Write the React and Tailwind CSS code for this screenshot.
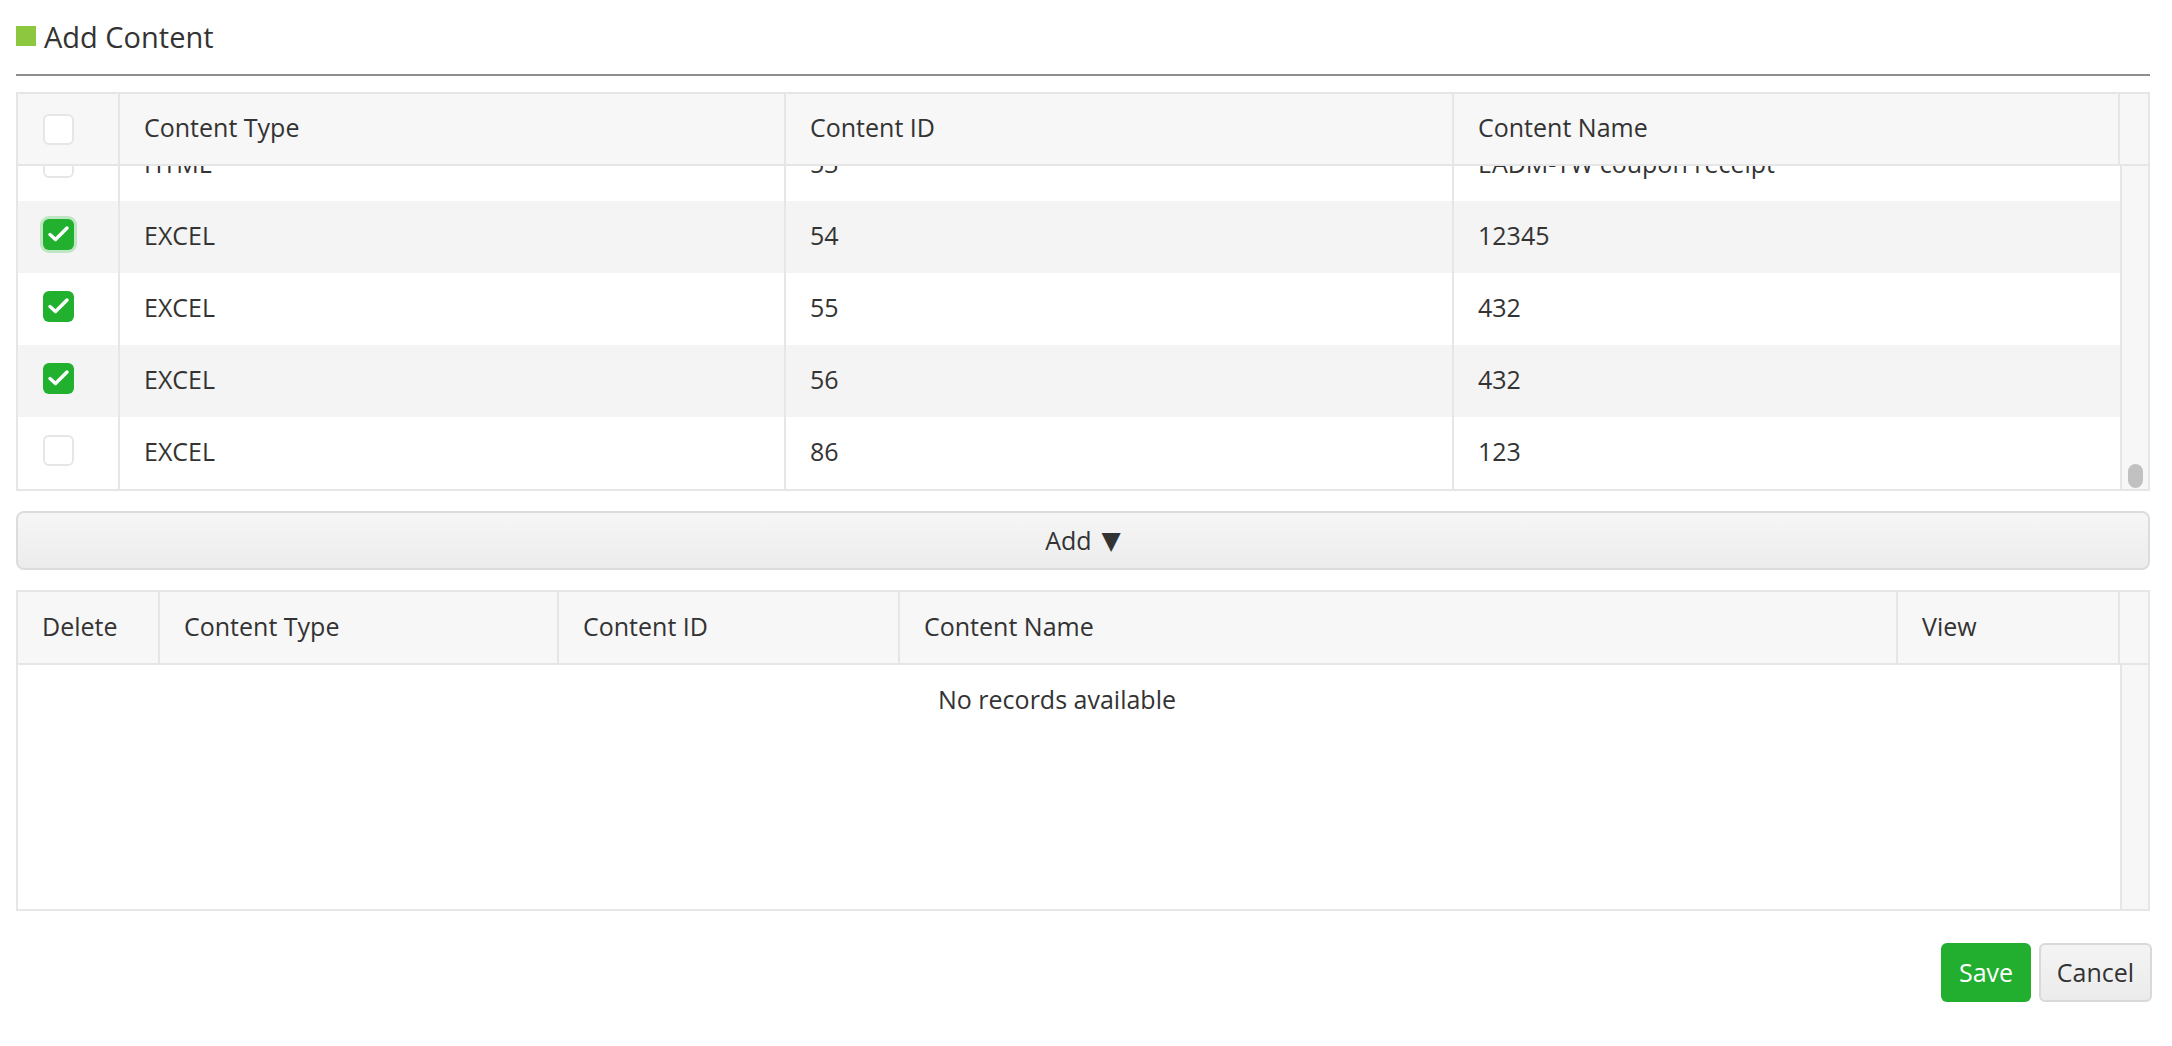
import React, { useRef, useLayoutEffect } from 'react';

// rows of the source grid (the first ones are scrolled out of view)
const sourceRows = [
  { type: 'HTML', id: 51, name: 'EADM-TW coupon issue', checked: false },
  { type: 'HTML', id: 52, name: 'EADM-TW coupon notice', checked: false },
  { type: 'HTML', id: 53, name: 'EADM-TW coupon receipt', checked: false },
  { type: 'EXCEL', id: 54, name: '12345', checked: true, focus: true },
  { type: 'EXCEL', id: 55, name: '432', checked: true },
  { type: 'EXCEL', id: 56, name: '432', checked: true },
  { type: 'EXCEL', id: 86, name: '123', checked: false },
];

const CheckBox = ({ checked, focus }) =>
  checked ? (
    <span
      className={`block h-[31px] w-[31px] rounded-[6px] bg-[#22b02f] ${focus ? 'ring-[3px] ring-[#bfe6c2]' : ''}`}
    >
      <svg viewBox="0 0 31 31" width="31" height="31" fill="none" stroke="white" strokeWidth="3.4" strokeLinecap="round" strokeLinejoin="round">
        <polyline points="7 15.5 12.5 20.5 24 9" />
      </svg>
    </span>
  ) : (
    <span className="block h-[31px] w-[31px] rounded-[6px] border-2 border-[#e6e6e6] bg-white" />
  );

export default function App() {
  const bodyRef = useRef(null);

  useLayoutEffect(() => {
    // la grilla arranca desplazada hasta el final
    if (bodyRef.current) bodyRef.current.scrollTop = 181;
  }, []);

  return (
    <div className="min-h-screen bg-white pl-4 pr-[22px] font-['Open_Sans',sans-serif] text-[#333]">
      {/* Title */}
      <div className="flex h-[76px] items-center gap-[8px] border-b-2 border-[#8f8f8f] pb-[2px]">
        <span className="h-[20px] w-[20px] bg-[#8dc63f]" />
        <h2 className="text-[29px] leading-none">Add Content</h2>
      </div>

      {/* Source grid */}
      <div className="mt-4 border-2 border-[#e6e6e6] text-[25px]">
        <div className="grid h-[72px] grid-cols-[102px_666px_668px_666px_1fr] border-b-2 border-[#e6e6e6] bg-[#f7f7f7]">
          <div className="flex items-center border-r-2 border-[#e6e6e6] pl-[25px]">
            <CheckBox checked={false} />
          </div>
          <div className="flex items-center border-r-2 border-[#e6e6e6] px-6 pb-[2px]">Content Type</div>
          <div className="flex items-center border-r-2 border-[#e6e6e6] px-6 pb-[2px]">Content ID</div>
          <div className="flex items-center border-r-2 border-[#e6e6e6] px-6 pb-[2px]">Content Name</div>
          <div />
        </div>
        <div className="flex h-[323px]">
          <div ref={bodyRef} className="flex-1 overflow-hidden">
            {sourceRows.map((r, i) => (
              <div
                key={r.id}
                className={`grid h-[72px] grid-cols-[102px_666px_668px_1fr] ${i % 2 === 1 ? 'bg-[#f4f4f4]' : 'bg-white'}`}
              >
                <div className="flex items-center border-r-2 border-[#e6e6e6] pb-[6px] pl-[25px]">
                  <CheckBox checked={r.checked} focus={r.focus} />
                </div>
                <div className="flex items-center border-r-2 border-[#e6e6e6] px-6 pb-[3px]">{r.type}</div>
                <div className="flex items-center border-r-2 border-[#e6e6e6] px-6 pb-[3px]">{r.id}</div>
                <div className="flex items-center whitespace-nowrap px-6 pb-[3px]">{r.name}</div>
              </div>
            ))}
          </div>
          <div className="flex w-[28px] flex-col items-center justify-end border-l-2 border-[#e6e6e6] bg-[#f7f7f7] pb-[1px]">
            <span className="h-[24px] w-[15px] rounded-full bg-[#c1c1c1]" />
          </div>
        </div>
      </div>

      {/* Add button */}
      <button className="mt-[20px] flex h-[59px] w-full items-center justify-center gap-[10px] rounded-[8px] border-2 border-[#dcdcdc] bg-gradient-to-b from-[#f6f6f6] to-[#ececec] text-[25px] text-[#333]">
        <span>Add</span>
        <span className="font-['DejaVu_Sans',sans-serif] text-[25px] leading-none">▼</span>
      </button>

      {/* Selected grid */}
      <div className="mt-[20px] border-2 border-[#e6e6e6] text-[25px]">
        <div className="grid h-[73px] grid-cols-[142px_399px_341px_998px_222px_1fr] border-b-2 border-[#e6e6e6] bg-[#f7f7f7]">
          <div className="flex items-center border-r-2 border-[#e6e6e6] px-6 pb-[2px]">Delete</div>
          <div className="flex items-center border-r-2 border-[#e6e6e6] px-6 pb-[2px]">Content Type</div>
          <div className="flex items-center border-r-2 border-[#e6e6e6] px-6 pb-[2px]">Content ID</div>
          <div className="flex items-center border-r-2 border-[#e6e6e6] px-6 pb-[2px]">Content Name</div>
          <div className="flex items-center border-r-2 border-[#e6e6e6] px-6 pb-[2px]">View</div>
          <div />
        </div>
        <div className="flex h-[244px]">
          <div className="flex-1">
            <div className="flex h-[70px] items-center justify-center pr-6">No records available</div>
          </div>
          <div className="w-[28px] border-l-2 border-[#e6e6e6] bg-[#f7f7f7]" />
        </div>
      </div>

      {/* Actions */}
      <div className="-mr-[2px] mt-[32px] flex justify-end gap-[8px]">
        <button className="h-[59px] w-[90px] rounded-[6px] bg-[#22ae2f] text-[25px] text-white">Save</button>
        <button className="h-[59px] w-[113px] rounded-[6px] border-2 border-[#d9d9d9] bg-gradient-to-b from-[#f4f4f4] to-[#ebebeb] text-[25px] text-[#333]">
          Cancel
        </button>
      </div>
    </div>
  );
}
